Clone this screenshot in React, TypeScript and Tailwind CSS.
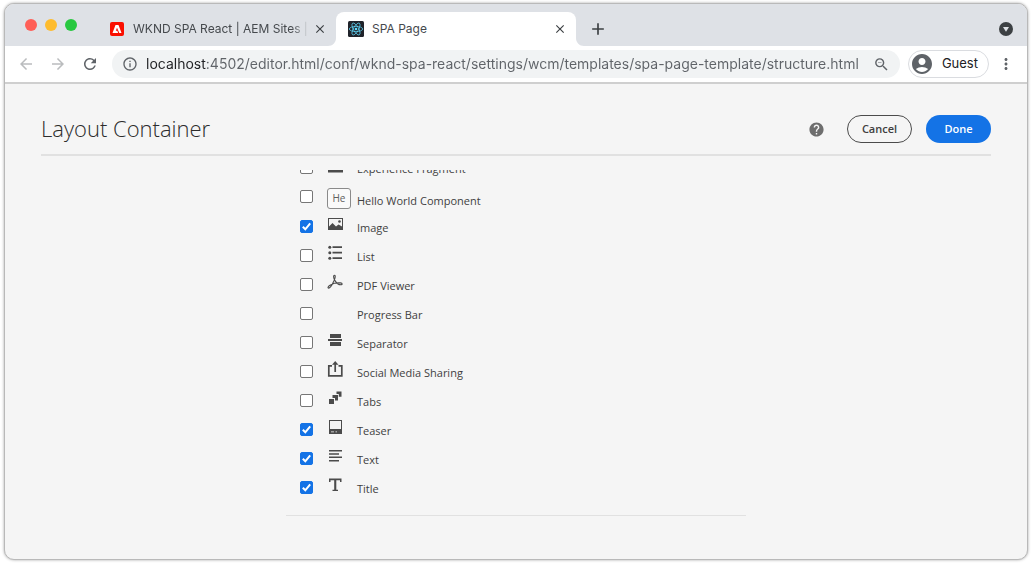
import type { ReactNode } from "react";
import {
  MdAccountCircle,
  MdAdd,
  MdArrowBack,
  MdArrowForward,
  MdClose,
  MdHelp,
  MdMoreVert,
  MdOutlineInfo,
  MdRefresh,
  MdZoomOut,
} from "react-icons/md";

const pageUrl =
  "localhost:4502/editor.html/conf/wknd-spa-react/settings/wcm/templates/spa-page-template/structure.html";

type Item = { id: string; label: string; checked?: boolean; badge?: string; icon?: ReactNode };

const items: Item[] = [
  {
    id: "experience-fragment",
    label: "Experience Fragment",
    icon: <path d="M1 2h15v13.500H1z" />,
  },
  { id: "hello-world", label: "Hello World Component", badge: "He" },
  {
    id: "image",
    label: "Image",
    checked: true,
    icon: (
      <>
        <path fillRule="evenodd" d="M1 2h15v12H1zM2 3v7.500l3.500-3.500 3.500 3.500L11.500 8.500l3.500 2V3z" />
        <circle cx="12.500" cy="5.500" r="1.300" />
      </>
    ),
  },
  {
    id: "list",
    label: "List",
    icon: (
      <>
        <path d="M5.500 1.300H15v1.800H5.500zM5.500 6.800H15v1.800H5.500zM5.500 12.300H15v1.800H5.500z" />
        <circle cx="2.800" cy="2.200" r="1.500" />
        <circle cx="2.800" cy="7.700" r="1.500" />
        <circle cx="2.800" cy="13.200" r="1.500" />
      </>
    ),
  },
  {
    id: "pdf-viewer",
    label: "PDF Viewer",
    icon: (
      <path
        fill="none"
        stroke="currentColor"
        strokeWidth="1.100"
        strokeLinejoin="round"
        d="M7.500 1.200c-1.400 0-1 3 .3 5.200 1.300 2.200 3.800 4.400 6 4.400 1.800 0 2-1.600-.4-1.900-3.400-.4-7.400.6-10.400 2.300-2.200 1.300-2.400 2.900-1.400 2.900 1.600 0 3.600-3.400 4.900-6.300C7.900 5.200 9 1.200 7.500 1.200z"
      />
    ),
  },
  { id: "progress-bar", label: "Progress Bar" },
  {
    id: "separator",
    label: "Separator",
    icon: <path d="M3 2h11v4H3zM1 7h14v2H1zM3 10h11v4H3z" />,
  },
  {
    id: "social-media-sharing",
    label: "Social Media Sharing",
    icon: (
      <>
        <path fill="none" stroke="currentColor" strokeWidth="1.700" d="M5 4.800H1.800v10h13v-10h-3.300M8.200 11V2" />
        <path d="M8.200 0l3.300 3.800H5z" />
      </>
    ),
  },
  {
    id: "tabs",
    label: "Tabs",
    icon: <path d="M2 9h5v5H2zM5.500 5h5.500v5.500H8V8H5.500zM9.500 1.500h5v5.200h-2.700V4H9.500z" />,
  },
  {
    id: "teaser",
    label: "Teaser",
    checked: true,
    icon: (
      <>
        <path fillRule="evenodd" d="M2 1h13v14H2zM3 2v8h11V2z" />
        <path fill="#f5f5f5" d="M4 12.500h3v.7H4zM8.500 12.500h1.500v.7H8.500z" />
      </>
    ),
  },
  {
    id: "text",
    label: "Text",
    checked: true,
    icon: <path d="M2 2h13v1.500H2zM2 5.300h10v1.500H2zM2 8.600h13v1.500H2zM2 12h10v1.500H2z" />,
  },
  {
    id: "title",
    label: "Title",
    checked: true,
    icon: <path d="M2 1.500h12.500V5H13V3.300H9.300v9.500H11V14H5.500v-1.200h1.700V3.300H3.500V5H2z" />,
  },
];

function AdobeIcon() {
  return (
    <svg viewBox="0 0 14 14" className="size-3.5 shrink-0" aria-hidden="true">
      <rect width="14" height="14" rx="2" fill="#fa0f00" />
      <path fill="#fff" d="M5.500 3h3L11.500 11H9.300L7 5.700 5.800 8.800h1.500l.9 2.200H2.500z" />
    </svg>
  );
}

function ReactIcon() {
  return (
    <svg viewBox="0 0 16 16" className="size-4 shrink-0" aria-hidden="true">
      <rect width="16" height="16" rx="1.500" fill="#20232a" />
      <g fill="none" stroke="#61dafb" strokeWidth="0.700" transform="rotate(0 8 8)">
        <ellipse cx="8" cy="8" rx="6.700" ry="2.600" />
        <ellipse cx="8" cy="8" rx="6.700" ry="2.600" transform="rotate(60 8 8)" />
        <ellipse cx="8" cy="8" rx="6.700" ry="2.600" transform="rotate(120 8 8)" />
      </g>
      <circle cx="8" cy="8" r="1.300" fill="#61dafb" />
    </svg>
  );
}

function TabFlare({ flipped = false }: { flipped?: boolean }) {
  return (
    <svg
      viewBox="0 0 8 8"
      className={flipped ? "size-2 shrink-0 -scale-x-100 self-end" : "size-2 shrink-0 self-end"}
      aria-hidden="true"
    >
      <path fill="#fff" d="M8 0v8H0c4.500 0 8-3.500 8-8z" />
    </svg>
  );
}

function TabStrip() {
  return (
    <div className="flex h-[42px] items-stretch bg-[#dee1e6] pr-3.5 pl-5 text-xs text-[#45494d]">
      <div className="flex items-center gap-2">
        <span className="size-3 rounded-full bg-[#ff5f57]" />
        <span className="size-3 rounded-full bg-[#febc2e]" />
        <span className="size-3 rounded-full bg-[#28c840]" />
      </div>
      <div className="flex w-[251px] items-center pt-2 pl-[33px]">
        <AdobeIcon />
        <span className="ml-[9px] w-44 overflow-hidden mask-r-from-90% whitespace-nowrap">
          WKND SPA React | AEM Sites |
        </span>
        <button type="button" aria-label="Close WKND SPA React" className="ml-1 text-[#3c4043]">
          <MdClose className="size-3.5" />
        </button>
      </div>
      <TabFlare />
      <div className="mt-2 flex w-60 items-center rounded-t-lg bg-white pr-[9px] pl-3">
        <ReactIcon />
        <span className="ml-2 flex-1">SPA Page</span>
        <button type="button" aria-label="Close SPA Page" className="text-[#3c4043]">
          <MdClose className="size-3.5" />
        </button>
      </div>
      <TabFlare flipped />
      <button type="button" aria-label="New tab" className="mt-2 ml-1 self-center text-[#3c4043]">
        <MdAdd className="size-5" />
      </button>
      <button type="button" aria-label="Search tabs" className="mt-2 ml-auto self-center">
        <svg viewBox="0 0 14 14" className="size-3.5">
          <circle cx="7" cy="7" r="7" fill="#3c4043" />
          <path fill="#dee1e6" d="M4 5h6L7 9.800z" />
        </svg>
      </button>
    </div>
  );
}

function Toolbar() {
  return (
    <div className="flex items-center border-b-2 border-[#cfcfcf] bg-white px-3 py-1">
      <button type="button" aria-label="Back" className="text-[#babcbe]">
        <MdArrowBack className="size-[18px]" />
      </button>
      <button type="button" aria-label="Forward" className="ml-3.5 text-[#babcbe]">
        <MdArrowForward className="size-[18px]" />
      </button>
      <button type="button" aria-label="Reload" className="ml-3.5 text-[#5f6368]">
        <MdRefresh className="size-[18px]" />
      </button>
      <div className="ml-[13px] flex h-7 flex-1 items-center rounded-full bg-[#f1f3f4] px-2.5 text-[#5f6368]">
        <MdOutlineInfo className="size-4 shrink-0" />
        <input
          type="text"
          aria-label="Address"
          defaultValue={pageUrl}
          className="ml-2 min-w-0 flex-1 bg-[linear-gradient(to_right,#202124_60px,#5f6368_60px)] bg-clip-text text-sm text-transparent caret-black outline-none"
        />
        <button type="button" aria-label="Zoom" className="ml-2">
          <MdZoomOut className="size-[17px]" />
        </button>
      </div>
      <button
        type="button"
        className="ml-2 flex h-7 items-center gap-2 rounded-full border border-[#dadce0] pr-2.5 pl-px text-[13px] text-[#202124]"
      >
        <MdAccountCircle className="size-6 text-[#5f6368]" />
        Guest
      </button>
      <button type="button" aria-label="Menu" className="ml-2 text-[#5f6368]">
        <MdMoreVert className="size-[18px]" />
      </button>
    </div>
  );
}

function ComponentRow({ item }: { item: Item }) {
  return (
    <li className={item.badge ? "flex h-[30px] items-start" : "flex h-[29px] items-start"}>
      <span className="grid size-[13px] shrink-0">
        <input
          id={item.id}
          type="checkbox"
          defaultChecked={item.checked}
          className="peer col-start-1 row-start-1 size-[13px] appearance-none rounded-[2px] border border-[#767676] bg-white checked:border-[#1473e6] checked:bg-[#1473e6]"
        />
        <svg
          viewBox="0 0 13 13"
          className="pointer-events-none invisible col-start-1 row-start-1 size-[13px] peer-checked:visible"
          aria-hidden="true"
        >
          <path fill="none" stroke="#fff" strokeWidth="2" d="M2.800 6.800l2.500 2.500 4.900-6" />
        </svg>
      </span>
      <label htmlFor={item.id} className="flex items-start">
        <span className="flex w-11 shrink-0 pl-3.5">
          {item.badge ? (
            <span className="-mt-0.5 flex h-[21px] w-6 items-center justify-center rounded-[3px] border border-[#8a8a8a] bg-[#fafafa] text-[10px] text-[#606060]">
              {item.badge}
            </span>
          ) : (
            <svg viewBox="0 0 16 16" className="-mt-1 size-4 fill-current text-[#4b4b4b]" aria-hidden="true">
              {item.icon}
            </svg>
          )}
        </span>
        <span className={item.badge ? "pt-[3px]" : "pt-0"}>{item.label}</span>
      </label>
    </li>
  );
}

export default function App() {
  return (
    <div className="flex h-screen flex-col bg-white px-1 pt-[3px] pb-1 font-['Inter',sans-serif]">
      <div className="flex flex-1 flex-col overflow-hidden rounded-[10px] border border-[#b9b9b9] bg-[#f5f5f5] shadow-[0_0_3px_rgba(0,0,0,0.35)]">
        <TabStrip />
        <Toolbar />
        <main className="flex flex-1 flex-col px-9 pt-7 font-['Open_Sans',sans-serif] text-[#3f3f3f]">
          <header className="flex items-center border-b-2 border-[#e1e1e1] pt-[3px] pb-[11px]">
            <h1 className="-mt-0.5 text-[22px] leading-7 font-light text-[#2c2c2c]">Layout Container</h1>
            <button type="button" aria-label="Help" className="ml-auto text-[#6e6e6e]">
              <MdHelp className="size-[17px]" />
            </button>
            <button
              type="button"
              className="ml-[22px] h-7 w-[65px] rounded-full border border-[#4b4b4b] text-[11px] font-semibold"
            >
              Cancel
            </button>
            <button
              type="button"
              className="ml-3.5 h-7 w-[65px] rounded-full bg-[#1473e6] text-[11px] font-semibold text-white"
            >
              Done
            </button>
          </header>
          <section className="mx-auto mt-3.5 w-full max-w-[460px] overflow-hidden border-b border-[#e1e1e1] pb-[5px]">
            <ul className="-mt-[9px] pl-3.5 text-[11px] leading-[15px]">
              {items.map((item) => (
                <ComponentRow key={item.id} item={item} />
              ))}
            </ul>
          </section>
        </main>
      </div>
    </div>
  );
}
